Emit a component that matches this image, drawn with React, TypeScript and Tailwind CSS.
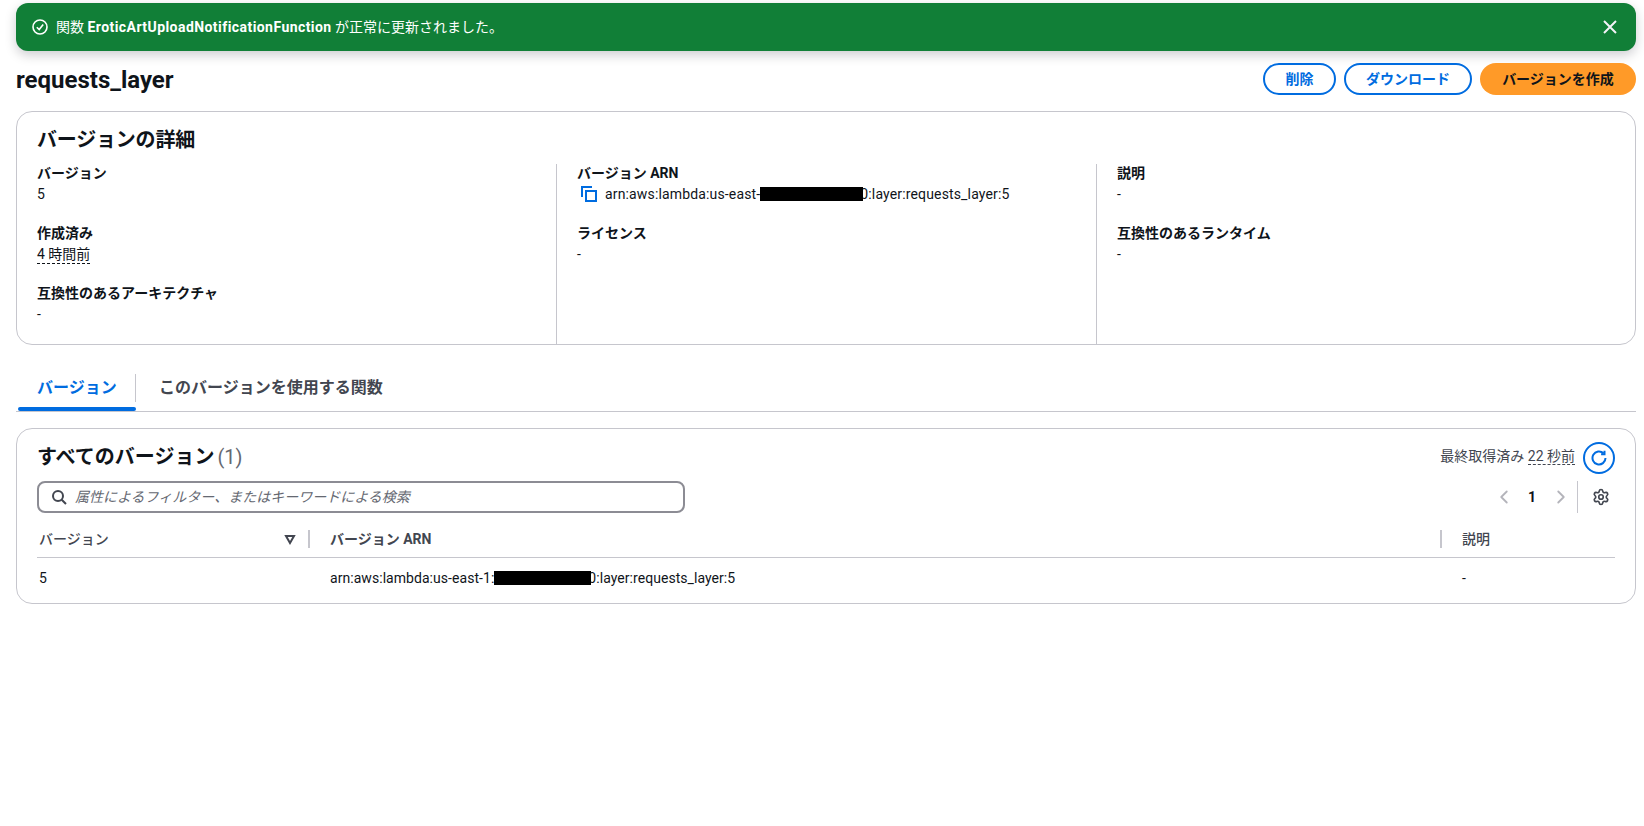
import { ChevronLeft, ChevronRight, Settings } from 'lucide-react';

const font = { fontFamily: 'Roboto, "Noto Sans CJK JP", sans-serif' };

function Field({ label, value }: { label: string; value: React.ReactNode }) {
  return (
    <div className="h-[60px]">
      <div className="text-sm leading-[18px] font-bold text-[#0f141a]">{label}</div>
      <div className="mt-[2px] text-sm leading-5 text-[#0f141a]">{value}</div>
    </div>
  );
}

function Redacted({ width }: { width: string }) {
  return <span className={`relative z-10 inline-block h-[14px] align-[-2px] bg-black ${width}`} />;
}

export default function App() {
  return (
    <div className="min-h-[826px] bg-white pt-[3px] pr-2 pl-4" style={font}>
      <div className="flex h-[48px] items-center justify-between rounded-xl bg-[#117f37] px-4 text-sm text-white shadow-[0_4px_12px_rgba(0,7,22,0.2)]">
        <div className="flex items-center gap-2">
          <svg width="16" height="16" viewBox="0 0 16 16" fill="none" stroke="currentColor" strokeWidth="1.6">
            <circle cx="8" cy="8" r="7" />
            <path d="M4.8 8.2 7.2 10.6 11.2 5.6" />
          </svg>
          <span>
            関数 <b className="tracking-[0.44px]">EroticArtUploadNotificationFunction</b> が正常に更新されました。
          </span>
        </div>
        <svg width="16" height="16" viewBox="0 0 16 16" fill="none" stroke="#f3f3f7" strokeWidth="2" className="mr-[2px]">
          <path d="M2 2l12 12M14 2 2 14" />
        </svg>
      </div>

      <div className="mt-3 flex h-8 items-center justify-between">
        <h1 className="pt-[2px] text-2xl leading-8 font-bold text-[#0f141a]">requests_layer</h1>
        <div className="flex gap-2">
          <button className="h-8 w-[73px] rounded-full border-2 border-[#006ce0] text-sm font-bold text-[#006ce0]">削除</button>
          <button className="h-8 w-[128px] rounded-full border-2 border-[#006ce0] text-sm font-bold text-[#006ce0]">ダウンロード</button>
          <button className="h-8 w-[156px] rounded-full bg-[#ff9a28] text-sm font-bold text-[#0f141a]">バージョンを作成</button>
        </div>
      </div>

      <section className="mt-4 h-[234px] rounded-2xl border border-[#c6c6cd] pt-4 pl-5">
        <h2 className="text-xl leading-6 font-bold tracking-[-0.2px] text-[#0f141a]">バージョンの詳細</h2>
        <div className="mt-3 grid h-40 grid-cols-[519px_540px_1fr]">
          <div>
            <Field label="バージョン" value="5" />
            <Field
              label="作成済み"
              value={<span className="border-b border-dashed border-[#0f141a] pb-px">4 時間前</span>}
            />
            <Field label="互換性のあるアーキテクチャ" value="-" />
          </div>
          <div className="border-l border-[#c6c6cd] pl-5">
            <Field
              label="バージョン ARN"
              value={
                <span className="flex items-center">
                  <svg width="16" height="16" viewBox="0 0 16 16" fill="none" stroke="#006ce0" strokeWidth="2" className="mr-2 ml-[4px]">
                    <path d="M1 11V1h10" />
                    <path d="M5 5h10v10H5z" />
                  </svg>
                  <span className="tracking-[0.15px] whitespace-pre">
                    arn:aws:lambda:us-east-
                    <Redacted width="w-[103px]" />
                    <span className="-ml-[3px]">0:layer:requests_layer:5</span>
                  </span>
                </span>
              }
            />
            <Field label="ライセンス" value="-" />
          </div>
          <div className="border-l border-[#c6c6cd] pl-5">
            <Field label="説明" value="-" />
            <Field label="互換性のあるランタイム" value="-" />
          </div>
        </div>
      </section>

      <div className="mt-6 flex h-[43px] border-b border-[#c6c6cd]">
        <div className="relative flex w-[120px] items-center pb-[4px] pl-[21px] text-base font-bold text-[#006ce0]">
          バージョン
          <span className="absolute right-0 bottom-0 left-[2px] h-1 rounded bg-[#006ce0]" />
          <span className="absolute top-[5px] right-0 bottom-[9px] w-px bg-[#c6c6cd]" />
        </div>
        <div className="flex items-center pb-[4px] pl-[23px] text-base font-bold text-[#424650]">このバージョンを使用する関数</div>
      </div>

      <section className="mt-4 h-[176px] rounded-2xl border border-[#c6c6cd] px-5 pt-[13px]">
        <div className="flex h-8 items-center justify-between">
          <h2 className="pb-[2px] text-xl leading-6 font-bold text-[#0f141a]">
            すべてのバージョン <span className="-ml-[2px] font-normal text-[#656871]">(1)</span>
          </h2>
          <div className="flex items-center gap-2">
            <span className="pb-[5px] text-sm text-[#424650]">
              最終取得済み{' '}
              <span className="border-b border-dashed border-[#424650]">22 秒前</span>
            </span>
            <button className="flex h-8 w-8 items-center justify-center rounded-full border-2 border-[#006ce0]">
              <svg width="16" height="16" viewBox="0 0 16 16" fill="none" stroke="#006ce0" strokeWidth="2">
                <path d="M14.5 8A6.5 6.5 0 1 1 12.5 3.3" />
                <path d="M13.5 0.8v3.4h-3.4" />
              </svg>
            </button>
          </div>
        </div>

        <div className="mt-[7px] flex h-8 items-center justify-between">
          <div className="flex h-8 w-[648px] items-center rounded-lg border-2 border-[#8c8c94] pl-3">
            <svg width="16" height="16" viewBox="0 0 16 16" fill="none" stroke="#424650" strokeWidth="2">
              <circle cx="7" cy="7" r="5" />
              <path d="M10.7 10.7 15 15" />
            </svg>
            <span className="ml-[8px] text-sm text-[#656871] italic">属性によるフィルター、またはキーワードによる検索</span>
          </div>
          <div className="flex items-center">
            <ChevronLeft size={22} strokeWidth={2} className="text-[#b4b4bb]" />
            <span className="ml-[13px] text-sm font-bold text-[#0f141a]">1</span>
            <ChevronRight size={22} strokeWidth={2} className="ml-[14px] text-[#b4b4bb]" />
            <span className="ml-[5px] h-8 w-px bg-[#c6c6cd]" />
            <Settings size={18} strokeWidth={2.2} className="mr-[5px] ml-[14px] text-[#424650]" />
          </div>
        </div>

        <div className="mt-[10px] grid h-[35px] grid-cols-[273px_1132px_1fr] items-center border-b border-[#c6c6cd] pb-[2px] text-sm font-bold text-[#424650]">
          <div className="flex items-center justify-between pl-[2px]">
            <span className="font-medium">バージョン</span>
            <span className="flex items-center">
              <svg width="12" height="12" viewBox="0 0 12 12" fill="none" stroke="#424650" strokeWidth="2" className="mr-[12px]">
                <path d="M2 3h8L6 10z" />
              </svg>
              <span className="h-[18px] w-[2px] bg-[#c6c6cd]" />
            </span>
          </div>
          <div className="flex items-center justify-between pl-5">
            <span>バージョン ARN</span>
            <span className="h-[18px] w-[2px] bg-[#c6c6cd]" />
          </div>
          <div className="pl-5 font-medium">説明</div>
        </div>

        <div className="grid h-[40px] grid-cols-[273px_1132px_1fr] items-center text-sm text-[#0f141a]">
          <div className="pl-[2px]">5</div>
          <div className="pl-5 tracking-[0.05px] whitespace-pre">
            arn:aws:lambda:us-east-1:
            <Redacted width="w-[97px]" />
            <span className="-ml-[3px]">0:layer:requests_layer:5</span>
          </div>
          <div className="pl-5">-</div>
        </div>
      </section>
    </div>
  );
}
